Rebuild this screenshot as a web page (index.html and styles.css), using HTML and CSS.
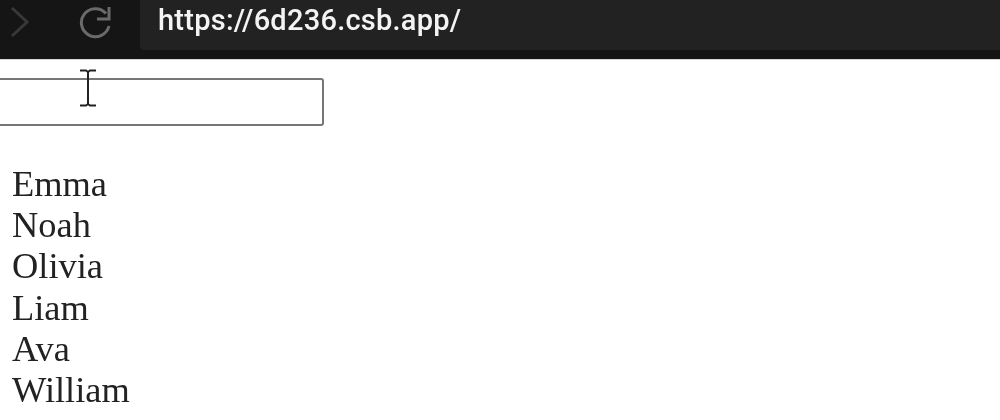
FILE: index.html
```html
<!DOCTYPE html>
<html lang="en">
<head>
  <meta charset="UTF-8">
  <title>Names</title>
  <link rel="stylesheet" href="styles.css">
</head>
<body>
  <div class="toolbar">
    <div class="navButtons">
      <svg class="forwardIcon" width="20" height="32" viewBox="0 0 20 32">
        <path d="M2 2 L17 16 L2 30" fill="none" stroke="#38383a" stroke-width="3"/>
      </svg>
      <svg class="reloadIcon" width="36" height="34" viewBox="0 0 36 34">
        <path d="M27 8.500 A14 14 0 1 0 30 21" fill="none" stroke="#6a6a6a" stroke-width="3"/>
        <path d="M30 2 V14 H18" fill="none" stroke="#6a6a6a" stroke-width="3"/>
      </svg>
    </div>
    <div class="addressBar">https://6d236.csb.app/</div>
  </div>
  <div class="content">
    <input class="searchBox" type="text">
    <ul class="nameList">
      <li>Emma</li>
      <li>Noah</li>
      <li>Olivia</li>
      <li>Liam</li>
      <li>Ava</li>
      <li>William</li>
    </ul>
    <svg class="textCursor" width="18" height="38" viewBox="0 0 18 38">
      <path d="M1 1.500 H7 L9 3 L11 1.500 H17 M9 3 V35 M1 36.500 H7 L9 35 L11 36.500 H17" fill="none" stroke="#222" stroke-width="2"/>
    </svg>
  </div>
</body>
</html>
```

FILE: styles.css
```css
html, body {
  margin: 0;
  padding: 0;
  background-color: #ffffff;
  overflow: hidden;
}
.toolbar {
  display: flex;
  height: 59px;
  background-color: #151515;
  border-bottom: 1px solid #d8d8d8;
  filter: blur(0.5px);
}
.navButtons {
  display: flex;
  align-items: flex-start;
  width: 140px;
  flex-shrink: 0;
}
.forwardIcon {
  margin-top: 6px;
  margin-left: 10px;
}
.reloadIcon {
  margin-top: 5px;
  margin-left: 49px;
}
.addressBar {
  flex: 1;
  height: 50px;
  padding-left: 18px;
  background-color: #222222;
  border-radius: 0 0 0 4px;
  color: #f4f4f4;
  font-family: Roboto, sans-serif;
  font-size: 29px;
  font-weight: 500;
  letter-spacing: 0.25px;
  line-height: 40px;
}
.content {
  position: relative;
  height: 360px;
  overflow: hidden;
  font-family: "Liberation Serif", serif;
  filter: blur(0.5px);
}
.searchBox {
  display: block;
  box-sizing: border-box;
  width: 334px;
  height: 48px;
  margin: 18px 0 0 -10px;
  border: 2px solid #767676;
  border-radius: 3px;
  background-color: #ffffff;
}
.nameList {
  list-style: none;
  margin: 38px 0 0 0;
  padding: 0 0 0 12px;
  color: #222222;
  font-size: 36.4px;
  line-height: 41.2px;
}
.textCursor {
  position: absolute;
  left: 79px;
  top: 9px;
}
```
